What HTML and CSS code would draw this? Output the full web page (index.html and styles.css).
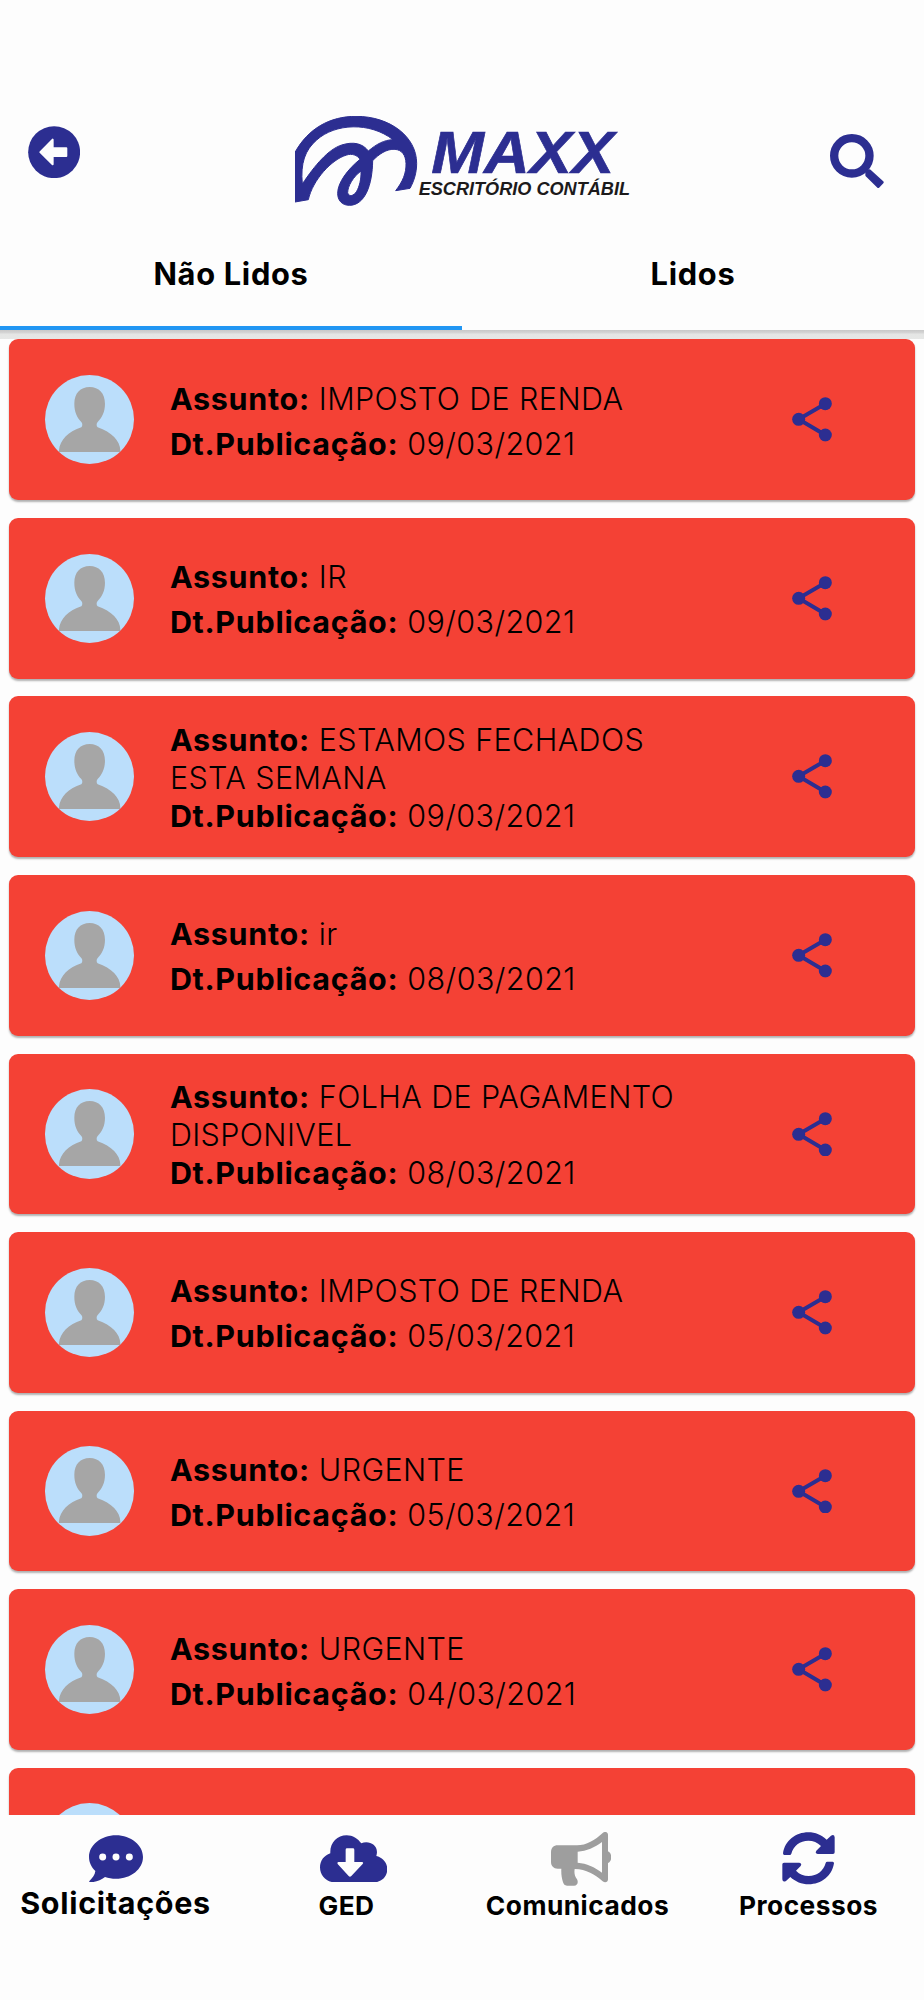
FILE: index.html
```html
<!DOCTYPE html>
<html lang="pt-BR">

<head>
    <meta charset="UTF-8">
    <meta name="viewport" content="width=device-width, initial-scale=1.0">
    <title>Maxx - Comunicados</title>
    <link rel="stylesheet" href="styles.css">
</head>

<body>
    <!-- Shared icons -->
    <svg class="sprite" width="0" height="0">
        <symbol id="avatar" viewBox="0 0 268 268">
            <path d="M134 36C162 36 180 55 180 86C180 110 171 128 158 141C154 146 154 153 158 157C200 170 226 200 226 226V231H42V226C44 196 72 168 109 157C113 153 113 146 109 141C96 128 88 110 88 86C88 55 106 36 134 36Z" fill="#a6a6a6"/>
        </symbol>
        <symbol id="share" viewBox="0 0 120 134">
            <path d="M100 20L20 67L100 114" fill="none" stroke="#2c2e91" stroke-width="12"/>
            <circle cx="100" cy="20" r="19.5" fill="#2c2e91"/>
            <circle cx="20" cy="67" r="19.5" fill="#2c2e91"/>
            <circle cx="100" cy="114" r="19.5" fill="#2c2e91"/>
        </symbol>
    </svg>

    <div class="app">
        <header>
            <div class="toolbar">
                <svg class="back" viewBox="83 77 157 157">
                    <circle cx="161.500" cy="155.500" r="78" fill="#2c2e91"/>
                    <path d="M120 155.500L157 118V192ZM150 144H198V167H150Z" fill="#fdfdfd" stroke="#fdfdfd" stroke-width="6" stroke-linejoin="round"/>
                </svg>
                <svg class="logo" viewBox="45 48 1005 270">
                    <path fill-rule="evenodd" fill="#2c2e91" stroke="#2c2e91" stroke-width="3" d="M45 157C85 85 150 49 228 49C330 49 410 110 410 190C410 220 401 245 390 265L347 272C368 245 379 220 378 190C377 165 366 150 345 148C320 146 296 163 278 182C277 255 255 316 208 316C185 316 173 300 173 280C173 248 203 208 240 178C232 165 215 160 200 165C155 178 98 240 85 299L45 306ZM67 252C61 190 75 150 110 120C165 70 270 65 339 119C312 120 290 132 265 153C248 130 220 124 185 135C145 148 105 195 67 252ZM243 213C220 230 203 258 203 278C206 292 222 288 230 274C238 260 244 238 243 213Z"/>
                    <text class="logo-name" x="454" y="219" textLength="549" lengthAdjust="spacingAndGlyphs">MAXX</text>
                    <text class="logo-sub" x="416" y="284" textLength="634" lengthAdjust="spacingAndGlyphs">ESCRITÓRIO CONTÁBIL</text>
                </svg>
                <svg class="search" viewBox="150 101 162 164">
                    <circle cx="215.500" cy="166.500" r="53" fill="none" stroke="#2c2e91" stroke-width="25"/>
                    <path d="M260 212L269 211L307 246L295 259L260 225Z" fill="#2c2e91" stroke="#2c2e91" stroke-width="8" stroke-linejoin="round"/>
                </svg>
            </div>
            <nav class="tabs">
                <a class="tab active">Não Lidos</a>
                <a class="tab">Lidos</a>
            </nav>
        </header>

        <main>
            <div class="card">
                <svg class="avatar"><use href="#avatar"/></svg>
                <div class="info">
                    <p><b>Assunto:</b> IMPOSTO DE RENDA</p>
                    <p><b>Dt.Publicação:</b> 09/03/2021</p>
                </div>
                <svg class="share"><use href="#share"/></svg>
            </div>
            <div class="card">
                <svg class="avatar"><use href="#avatar"/></svg>
                <div class="info">
                    <p><b>Assunto:</b> IR</p>
                    <p><b>Dt.Publicação:</b> 09/03/2021</p>
                </div>
                <svg class="share"><use href="#share"/></svg>
            </div>
            <div class="card">
                <svg class="avatar"><use href="#avatar"/></svg>
                <div class="info long">
                    <p><b>Assunto:</b> ESTAMOS FECHADOS<br>ESTA SEMANA</p>
                    <p><b>Dt.Publicação:</b> 09/03/2021</p>
                </div>
                <svg class="share"><use href="#share"/></svg>
            </div>
            <div class="card">
                <svg class="avatar"><use href="#avatar"/></svg>
                <div class="info">
                    <p><b>Assunto:</b> ir</p>
                    <p><b>Dt.Publicação:</b> 08/03/2021</p>
                </div>
                <svg class="share"><use href="#share"/></svg>
            </div>
            <div class="card">
                <svg class="avatar"><use href="#avatar"/></svg>
                <div class="info long">
                    <p><b>Assunto:</b> FOLHA DE PAGAMENTO<br>DISPONIVEL</p>
                    <p><b>Dt.Publicação:</b> 08/03/2021</p>
                </div>
                <svg class="share"><use href="#share"/></svg>
            </div>
            <div class="card">
                <svg class="avatar"><use href="#avatar"/></svg>
                <div class="info">
                    <p><b>Assunto:</b> IMPOSTO DE RENDA</p>
                    <p><b>Dt.Publicação:</b> 05/03/2021</p>
                </div>
                <svg class="share"><use href="#share"/></svg>
            </div>
            <div class="card">
                <svg class="avatar"><use href="#avatar"/></svg>
                <div class="info">
                    <p><b>Assunto:</b> URGENTE</p>
                    <p><b>Dt.Publicação:</b> 05/03/2021</p>
                </div>
                <svg class="share"><use href="#share"/></svg>
            </div>
            <div class="card">
                <svg class="avatar"><use href="#avatar"/></svg>
                <div class="info">
                    <p><b>Assunto:</b> URGENTE</p>
                    <p><b>Dt.Publicação:</b> 04/03/2021</p>
                </div>
                <svg class="share"><use href="#share"/></svg>
            </div>
            <div class="card">
                <svg class="avatar"><use href="#avatar"/></svg>
            </div>
        </main>

        <!-- Bottom navigation -->
        <nav class="bottom-nav">
            <a class="item big">
                <svg class="chat" viewBox="266 254 162 142">
                    <path fill="#2c2e91" d="M347 254.500C392 254.500 428 284 428 320C428 356 392 385.500 347 385.500C335 385.500 324 383.500 314 380C301 390 285 396 268 396C266 396 266 393 268 391C276 383 284 373 285 362C273 351 266 336 266 320C266 284 302 254.500 347 254.500Z"/>
                    <circle cx="307" cy="320" r="10.500" fill="#fdfdfd"/>
                    <circle cx="347" cy="320" r="10.500" fill="#fdfdfd"/>
                    <circle cx="387" cy="320" r="10.500" fill="#fdfdfd"/>
                </svg>
                <span>Solicitações</span>
            </a>
            <a class="item">
                <svg class="cloud" viewBox="959 254 202 142">
                    <path fill="#2c2e91" d="M1003 396C978 396 959 376 959 351C959 332 971 315 990 309C988 277 1010 254.500 1039 254.500C1057 254.500 1073 264 1083 279C1102 270 1130 280 1130 305C1130 309 1129 314 1128 317C1147 321 1161 337 1161 357C1161 379 1144 396 1122 396Z"/>
                    <path fill="#fdfdfd" d="M1040 294H1058Q1062 294 1062 298V335H1085Q1091 336 1087 341L1053 377Q1049 381 1045 377L1012 341Q1009 336 1014 335H1036V298Q1036 294 1040 294Z"/>
                </svg>
                <span>GED</span>
            </a>
            <a class="item">
                <svg class="horn" viewBox="272 245 182 162">
                    <path fill="#9e9e9e" fill-rule="evenodd" d="M292 285H350C378 285 404 269 427 248C434 242 443 245 443 254V303C456 309 456 332 443 338V387C443 396 434 399 427 393C404 372 378 357 343 356C341 368 343 378 350 387C355 396 351 406 341 406H320C313 406 310 402 308 396C304 383 302 369 303 355H292C280 355 272 347 272 335V305C272 293 280 285 292 285ZM352 304V337C379 339 403 350 425 367V275C403 292 379 302 352 304Z"/>
                </svg>
                <span>Comunicados</span>
            </a>
            <a class="item">
                <svg class="sync" viewBox="966 246 159 158">
                    <g fill="#2c2e91">
                        <path id="half" d="M973 315Q969 315 969 310C975 272 1007 247 1045 247C1066 247 1085 255 1100 269L1113 257Q1123 252 1124 262V307Q1124 312 1119 312H1073Q1064 310 1069 302L1083 288C1072 277 1060 272 1045 272C1020 272 1000 288 994 311Q993 315 989 315Z"/>
                        <use href="#half" transform="rotate(180 1045.500 325)"/>
                    </g>
                </svg>
                <span>Processos</span>
            </a>
        </nav>
    </div>
</body>

</html>
```

FILE: styles.css
```css
body {
    font-family: Inter, 'Noto Sans', sans-serif;
    margin: 0;
    padding: 0;
    background-color: #fdfdfd;
    color: #000;
}

svg {
    display: block;
    flex-shrink: 0;
}

.sprite {
    position: absolute;
}

.app {
    height: 2000px;
    display: flex;
    flex-direction: column;
    overflow: hidden;
}

/* Header */
header {
    height: 330px;
    flex-shrink: 0;
    display: flex;
    flex-direction: column;
    justify-content: flex-end;
}

.toolbar {
    height: 120px;
    display: flex;
    align-items: flex-start;
    justify-content: space-between;
    padding: 0 40px 0 27.500px;
}

.back {
    width: 52.300px;
    height: 52.300px;
    margin-top: 15.600px;
}

.logo {
    width: 335px;
    height: 90px;
    margin: 6px 0 0 16px;
}

.logo-name, .logo-sub {
    font-family: 'Liberation Sans', sans-serif;
    font-weight: bold;
    font-style: italic;
}

.logo-name {
    font-size: 177px;
    fill: #2c2e91;
    stroke: #2c2e91;
    stroke-width: 2px;
}

.logo-sub {
    font-size: 53px;
    fill: #1c1a1b;
}

.search {
    width: 54px;
    height: 54.700px;
    margin-top: 23.700px;
}

.tabs {
    display: flex;
    height: 100px;
}

.tab {
    flex: 1;
    box-sizing: border-box;
    border-bottom: 4px solid transparent;
    padding-top: 25px;
    font-size: 30.800px;
    line-height: 38px;
    font-weight: 650;
    letter-spacing: 0.700px;
    text-align: center;
}

.tab.active {
    border-bottom-color: #2196f3;
}

/* List */
main {
    height: 1484.500px;
    flex-shrink: 0;
    box-sizing: border-box;
    overflow: hidden;
    padding: 9.400px 8.900px 0;
    background: linear-gradient(#c8c8c8 0, #d6d6d6 3px, #e4e5e4 4px, #e6e7e6 9px, #fdfdfd 9px);
}

.card {
    height: 160.700px;
    box-sizing: border-box;
    margin-bottom: 17.860px;
    padding: 0 83px 0 35.700px;
    display: flex;
    align-items: center;
    border-radius: 9px;
    background-color: #f44135;
    box-shadow: 0 2px 2px rgba(0, 0, 0, 0.3);
}

.avatar {
    width: 89.300px;
    height: 89.300px;
    border-radius: 50%;
    background-color: #bbdefb;
}

.info {
    flex: 1;
    margin-left: 36px;
    padding-top: 2px;
    font-size: 30.500px;
    line-height: 45px;
    font-weight: 350;
    letter-spacing: 0.400px;
    white-space: nowrap;
}

.info.long {
    line-height: 38px;
}

.info p {
    margin: 0;
}

.info b {
    font-weight: 700;
    letter-spacing: 0.700px;
}

.share {
    width: 40px;
    height: 44.700px;
}

/* Bottom navigation */
.bottom-nav {
    flex: 1;
    display: flex;
    background-color: #fdfdfd;
}

.item {
    flex: 1;
    display: flex;
    flex-direction: column;
    align-items: center;
    font-size: 26.300px;
    line-height: 32px;
    font-weight: 700;
    letter-spacing: 0.500px;
}

.item span {
    margin-top: auto;
    margin-bottom: 78.500px;
}

.item.big {
    font-size: 30.500px;
    letter-spacing: 0.700px;
}

.item.big span {
    margin-bottom: 81.500px;
}

.chat {
    width: 54px;
    height: 47.300px;
    margin-top: 20px;
}

.cloud {
    width: 67.300px;
    height: 47.300px;
    margin: 20px 0 0 14px;
}

.horn {
    width: 60.700px;
    height: 54px;
    margin: 17px 0 0 7px;
}

.sync {
    width: 53px;
    height: 52.700px;
    margin-top: 17.500px;
}
```
